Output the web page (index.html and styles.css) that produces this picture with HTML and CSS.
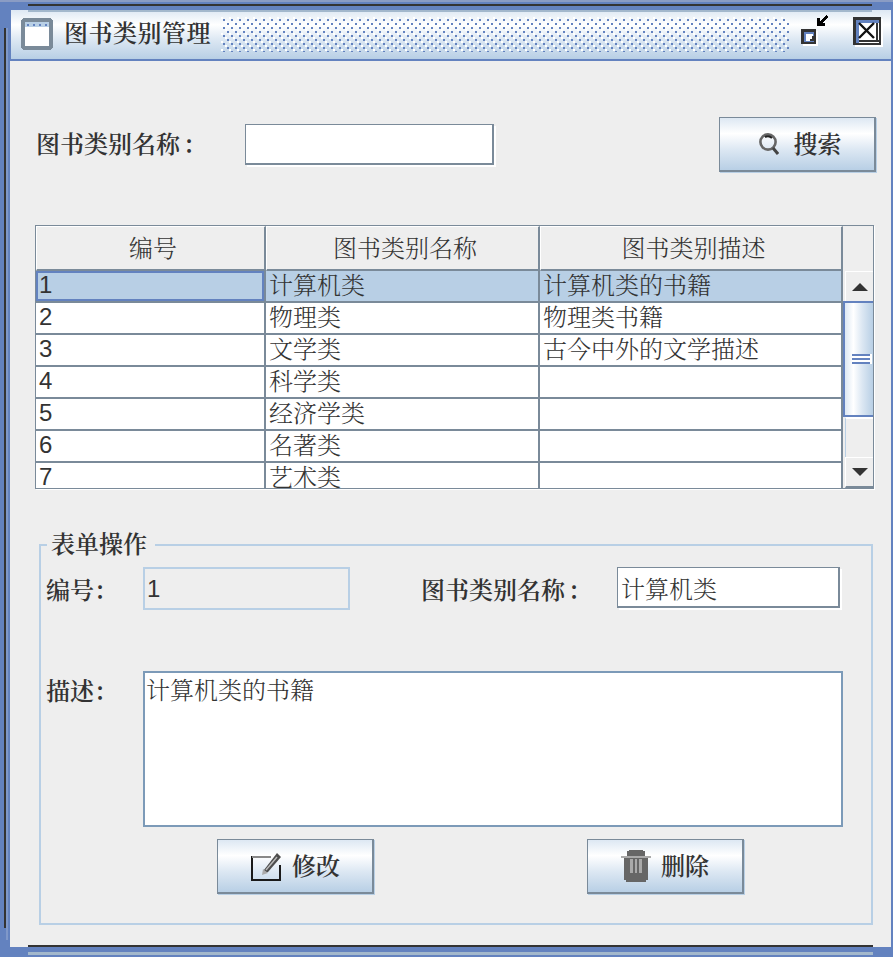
FILE: index.html
```html
<!DOCTYPE html>
<html lang="zh-CN">
<head>
<meta charset="utf-8">
<title>图书类别管理</title>
<link rel="stylesheet" href="styles.css">
</head>
<body>
<div class="frame">
  <div class="frame-left"></div>
  <header class="titlebar">
    <svg class="win-icon" width="32" height="32" viewBox="0 0 32 32" shape-rendering="crispEdges">
      <path d="M2 0h28v1h1v1h1v28h-1v1h-1v1H2v-1H1v-1H0V2h1V1h1z" fill="#7a8a99"/>
      <rect x="4" y="4" width="24" height="24" fill="#fff"/>
      <rect x="4" y="4" width="24" height="5" fill="#b8cfe5"/>
      <path d="M6 6h2v2H6zM12 6h2v2h-2zM18 6h2v2h-2zM24 6h2v2h-2z" fill="#6382bf"/>
    </svg>
    <h1 class="title">图书类别管理</h1>
    <svg class="bumps" height="35" shape-rendering="crispEdges">
      <defs>
        <pattern id="bump" width="8" height="8" patternUnits="userSpaceOnUse">
          <rect x="0" y="0" width="2" height="2" fill="#ffffff"/>
          <rect x="2" y="2" width="2" height="2" fill="#6382bf"/>
          <rect x="4" y="4" width="2" height="2" fill="#ffffff"/>
          <rect x="6" y="6" width="2" height="2" fill="#6382bf"/>
        </pattern>
      </defs>
      <rect width="100%" height="100%" fill="url(#bump)"/>
    </svg>
    <svg class="btn-restore" width="28" height="32" viewBox="0 0 28 32" shape-rendering="crispEdges">
      <rect x="2" y="17" width="15" height="15" fill="#fff"/>
      <rect x="0" y="15" width="15" height="15" fill="#333"/>
      <rect x="3" y="18" width="10" height="10" fill="#6382bf"/>
      <rect x="5" y="20" width="7" height="7" fill="#fff"/>
      <path d="M9 27h4v-5h-2v3H9z" fill="#333"/>
      <path d="M16 4h3v5h5v3h-8z" fill="#000"/>
      <path d="M18 8l7-7 2 2-7 7z" fill="#000"/>
    </svg>
    <svg class="btn-close" width="30" height="30" viewBox="0 0 30 30" shape-rendering="crispEdges">
      <rect x="2" y="2" width="28" height="28" fill="#fff"/>
      <rect x="0" y="0" width="28" height="28" fill="#333"/>
      <rect x="3" y="3" width="23" height="23" fill="#6382bf"/>
      <rect x="6" y="6" width="20" height="20" fill="#fff"/>
      <rect x="6" y="23" width="20" height="2" fill="#333"/>
      <rect x="23" y="6" width="2" height="19" fill="#333"/>
      <path d="M6 6l15 15M21 6L6 21" stroke="#111" stroke-width="2.4" fill="none" shape-rendering="auto"/>
    </svg>
  </header>

  <main class="content">
    <div class="search-row">
      <label class="label search-label" for="q">图书类别名称<span class="colon colon-wide">：</span></label>
      <input id="q" class="field search-field" type="text">
      <button class="btn search-btn" type="button">
        <svg width="20" height="24" viewBox="0 0 20 24">
          <circle cx="9" cy="10" r="7.6" fill="none" stroke="#666" stroke-width="2.6"/>
          <path d="M6 5a6 6 0 0 1 7 1" fill="none" stroke="#222" stroke-width="2"/>
          <path d="M14 16l5 6" stroke="#444" stroke-width="3" fill="none"/>
        </svg>
        <span class="btn-text">搜索</span>
      </button>
    </div>

    <div class="tbl">
      <div class="tbl-head">
        <div class="th col1">编号</div>
        <div class="th col2">图书类别名称</div>
        <div class="th col3">图书类别描述</div>
      </div>
      <div class="tbl-main">
        <div class="rows">
          <div class="row selected"><div class="td col1 num focus">1</div><div class="td col2">计算机类</div><div class="td col3">计算机类的书籍</div></div>
          <div class="row"><div class="td col1 num">2</div><div class="td col2">物理类</div><div class="td col3">物理类书籍</div></div>
          <div class="row"><div class="td col1 num">3</div><div class="td col2">文学类</div><div class="td col3">古今中外的文学描述</div></div>
          <div class="row"><div class="td col1 num">4</div><div class="td col2">科学类</div><div class="td col3"></div></div>
          <div class="row"><div class="td col1 num">5</div><div class="td col2">经济学类</div><div class="td col3"></div></div>
          <div class="row"><div class="td col1 num">6</div><div class="td col2">名著类</div><div class="td col3"></div></div>
          <div class="row"><div class="td col1 num">7</div><div class="td col2">艺术类</div><div class="td col3"></div></div>
        </div>
        <div class="scrollbar">
          <div class="sb-btn sb-up"><span class="tri tri-up"></span></div>
          <div class="sb-thumb"><span class="grip"></span></div>
          <div class="sb-track"></div>
          <div class="sb-btn sb-down"><span class="tri tri-down"></span></div>
        </div>
      </div>
    </div>

    <fieldset class="group">
      <legend class="legend">表单操作</legend>
      <div class="form-row first-row">
        <label class="label label-short" for="fid">编号<span class="colon">：</span></label>
        <input id="fid" class="field-disabled" type="text" value="1" disabled>
        <label class="label label-name" for="fname">图书类别名称<span class="colon colon-wide">：</span></label>
        <input id="fname" class="field name-field" type="text" value="计算机类">
      </div>
      <div class="form-row desc-row">
        <label class="label label-short label-top" for="fdesc">描述<span class="colon">：</span></label>
        <textarea id="fdesc" class="desc">计算机类的书籍</textarea>
      </div>
      <div class="form-row actions">
        <button class="btn" type="button">
          <svg width="32" height="30" viewBox="0 0 32 30">
            <path d="M21 6H2v23h28V14" fill="none" stroke="#1a1a1a" stroke-width="2"/>
            <path d="M2 6h19" stroke="#888" stroke-width="2"/>
            <path d="M14 19L27 2l4 4-13 15-5 2z" fill="#4d4d4d"/>
            <path d="M16 19L27 6" stroke="#bbb" stroke-width="1.4"/>
            <path d="M13 18l-1 6 6-2z" fill="#aaa"/>
          </svg>
          <span class="btn-text">修改</span>
        </button>
        <button class="btn" type="button">
          <svg width="30" height="32" viewBox="0 0 30 32" shape-rendering="crispEdges">
            <path d="M8 0h14v1h2v5H6V1h2z" fill="#666"/>
            <rect x="0" y="6" width="30" height="2" fill="#aaa"/>
            <path d="M3 8h24v22h-2v2H5v-2H3z" fill="#666"/>
            <path d="M9 9h3v14H9zM14 9h2v14h-2zM18 9h3v14h-3z" fill="#a9a9a9"/>
          </svg>
          <span class="btn-text">删除</span>
        </button>
      </div>
    </fieldset>
  </main>
</div>
</body>
</html>
```

FILE: styles.css
```css
* { box-sizing: border-box; }
html, body { margin: 0; padding: 0; }
body {
  width: 893px;
  height: 957px;
  overflow: hidden;
  font-family: "Noto Serif CJK SC", "Noto Sans CJK SC", "Liberation Sans", sans-serif;
  font-size: 24px;
  color: #333;
}
.frame {
  position: relative;
  width: 893px;
  height: 957px;
  padding: 8px 2px 10px 10px;
  background: #6382bf;
  border-top: 2px solid #8a9cc4;
}
.frame::before {
  content: "";
  position: absolute;
  left: 28px;
  top: 2px;
  width: 844px;
  height: 4px;
  border-top: 2px solid #333;
  border-bottom: 2px solid #a3b8cc;
}
.frame::after {
  content: "";
  position: absolute;
  left: 28px;
  bottom: 2px;
  width: 845px;
  height: 5px;
  border-top: 2px solid #333;
  border-bottom: 3px solid #a3b8cc;
}
.frame-left {
  position: absolute;
  left: 4px;
  top: 26px;
  width: 4px;
  height: 912px;
  background:
    linear-gradient(#333, #333) left top / 2px 900px no-repeat,
    linear-gradient(#7f98c9, #7f98c9) right top / 2px 100% no-repeat;
}
.titlebar {
  display: flex;
  align-items: center;
  height: 51px;
  margin-left: 1px;
  padding: 0 8px 3px 10px;
  background: linear-gradient(#dde8f3 0, #fff 30%, #dde8f3 60%, #b8cfe5 100%);
  border-bottom: 2px solid #6382bf;
  box-shadow: inset 0 -1px 0 #b8cfe5;
}
.win-icon { flex: none; margin-right: 11px; margin-top: 1px; }
.title {
  margin: 0 0 2px;
  font-size: 24px;
  font-weight: 600;
  letter-spacing: .5px;
  line-height: 30px;
  white-space: nowrap;
}
.bumps { flex: 1; min-width: 0; margin: 7px 12px 0 10px; align-self: flex-start; }
.btn-restore { flex: none; margin: 4px 24px 0 0; align-self: flex-start; }
.btn-close { flex: none; margin-top: 7px; align-self: flex-start; }

.content {
  height: 886px;
  background: #eee;
  padding-top: 56px;
}
.label {
  font-weight: 600;
  white-space: nowrap;
  line-height: 32px;
  padding-bottom: 2px;
}
.colon { font-family: "Noto Serif CJK TC", "Noto Serif CJK JP", "Noto Sans CJK TC", serif; }
.colon-wide { padding-left: 3px; }
.search-row {
  display: flex;
  align-items: center;
  height: 55px;
  padding: 0 15px 0 26px;
}
.search-label { width: 209px; padding-bottom: 3px; }
.field {
  font: inherit;
  font-weight: 300;
  color: #333;
  padding: 0 3px;
  background: #fff;
  border: 1px solid #7a8a99;
  border-right-width: 2px;
  border-bottom-width: 2px;
  box-shadow: 2px 2px 0 #fff;
  outline: none;
}
.search-field { width: 249px; height: 41px; }
.btn {
  display: flex;
  align-items: center;
  justify-content: center;
  gap: 10px;
  width: 157px;
  height: 55px;
  padding: 0;
  font: inherit;
  font-weight: 600;
  color: #333;
  background: linear-gradient(#dde8f3 0, #fff 30%, #dde8f3 60%, #b8cfe5 100%);
  border: 1px solid #7a8a99;
  border-right-width: 2px;
  border-bottom-width: 2px;
  box-shadow: 1px 1px 0 #b8cfe5;
}
.btn-text { padding-bottom: 3px; }
.search-btn { margin-left: auto; gap: 15px; padding-left: 6px; }

.tbl {
  width: 839px;
  height: 264px;
  margin: 53px 0 0 25px;
  background: #eee;
  border: 1px solid #7a8a99;
  box-shadow: 1px 1px 0 #fff;
}
.tbl-head { display: flex; height: 45px; }
.col1 { width: 230px; }
.col2 { width: 274px; }
.col3 { width: 303px; }
.th {
  display: flex;
  align-items: center;
  justify-content: center;
  padding: 0 0 3px 5px;
  font-weight: 300;
  background: #eee;
  border-top: 1px solid #fff;
  border-left: 1px solid #fff;
  border-right: 2px solid #7a8a99;
  border-bottom: 2px solid #7a8a99;
}
.tbl-main { display: flex; height: 217px; }
.rows { width: 807px; height: 217px; overflow: hidden; flex: none; background: #fff; }
.row { display: flex; height: 32px; background: #fff; }
.row.selected { background: #b8cfe5; }
.td {
  height: 32px;
  padding-left: 3px;
  font-weight: 300;
  line-height: 26px;
  white-space: nowrap;
  border-right: 2px solid #7a8a99;
  border-bottom: 2px solid #7a8a99;
}
.num { font-family: "Liberation Sans", sans-serif; font-weight: 400; line-height: 28px; }
.td.focus { box-shadow: inset 0 0 0 2px #6382bf; }

.scrollbar { flex: 1; display: flex; flex-direction: column; background: #eee; }
.sb-btn {
  display: flex;
  align-items: center;
  justify-content: center;
  margin-left: 2px;
  background: #eee;
  border-top: 1px solid #fff;
  border-left: 1px solid #fff;
}
.sb-up { height: 30px; }
.sb-down { height: 31px; border-bottom: 2px solid #7a8a99; }
.tri { display: block; width: 0; height: 0; border-left: 8px solid transparent; border-right: 8px solid transparent; }
.tri-up { border-bottom: 8px solid #333; }
.tri-down { border-top: 8px solid #333; }
.sb-thumb {
  height: 116px;
  background: linear-gradient(90deg, #dde8f3 0, #fff 30%, #dde8f3 60%, #b8cfe5 100%);
  border: 2px solid #6382bf;
  border-right: 0;
  display: flex;
  align-items: center;
  justify-content: center;
}
.grip {
  display: block;
  width: 18px;
  height: 10px;
  margin-left: 4px;
  background: repeating-linear-gradient(#6382bf 0 2px, #fff 2px 4px);
  box-shadow: 2px 0 0 #fff;
}
.sb-track {
  flex: 1;
  margin-left: 2px;
  background: #eee;
  border-left: 1px solid #b8cfe5;
  border-top: 2px solid #fff;
}

.group {
  height: 394px;
  margin: 42px 18px 0 29px;
  padding: 8px 0 0 5px;
  border: 2px solid #b8cfe5;
  min-width: 0;
}
.legend {
  margin-left: 1px;
  padding: 0 8px 4px 4px;
  font-weight: 600;
  line-height: 24px;
}
.form-row { display: flex; }
.first-row { align-items: flex-start; height: 44px; }
.first-row .label { line-height: 44px; padding-bottom: 0; height: 42px; }
.label-short { width: 97px; }
.label-name { width: 196px; margin-left: 71px; }
.field-disabled {
  width: 207px;
  height: 43px;
  padding: 0 2px;
  font: 24px "Liberation Sans", sans-serif;
  color: #333;
  background: #eee;
  border: 2px solid #b8cfe5;
}
.name-field { width: 223px; height: 41px; }
.desc-row { margin-top: 60px; height: 156px; }
.label-top { padding-top: 3px; }
.desc {
  width: 700px;
  height: 156px;
  padding: 0 1px;
  font: inherit;
  font-weight: 300;
  line-height: 32px;
  color: #333;
  background: #fff;
  border: 2px solid #7c9ab8;
  outline: none;
  resize: none;
}
.actions { margin-top: 12px; padding-left: 171px; gap: 213px; }
```
